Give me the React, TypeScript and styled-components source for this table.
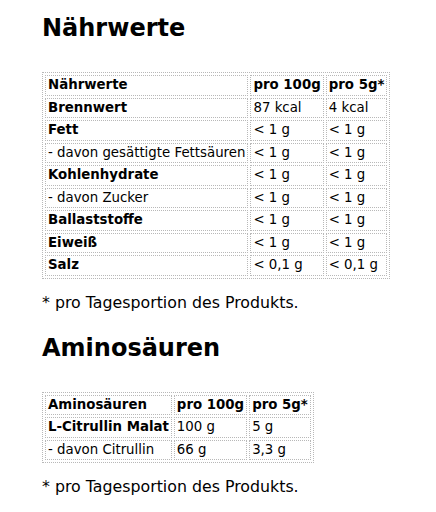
import React, { FC } from "react";
import styled, { createGlobalStyle } from "styled-components";

type Row = {
  label: string;
  bold?: boolean;
  a: string;
  b: string;
};

const nutrition: Row[] = [
  { label: "Brennwert", bold: true, a: "87 kcal", b: "4 kcal" },
  { label: "Fett", bold: true, a: "< 1 g", b: "< 1 g" },
  { label: "- davon gesättigte Fettsäuren", a: "< 1 g", b: "< 1 g" },
  { label: "Kohlenhydrate", bold: true, a: "< 1 g", b: "< 1 g" },
  { label: "- davon Zucker", a: "< 1 g", b: "< 1 g" },
  { label: "Ballaststoffe", bold: true, a: "< 1 g", b: "< 1 g" },
  { label: "Eiweiß", bold: true, a: "< 1 g", b: "< 1 g" },
  { label: "Salz", bold: true, a: "< 0,1 g", b: "< 0,1 g" },
];

const amino: Row[] = [
  { label: "L-Citrullin Malat", bold: true, a: "100 g", b: "5 g" },
  { label: "- davon Citrullin", a: "66 g", b: "3,3 g" },
];

const GlobalStyle = createGlobalStyle`
  body {
    margin: 0;
    background: #fff;
    color: #000;
    font-family: "DejaVu Sans", Verdana, sans-serif;
  }
`;

const Page = styled.div`
  padding: 12px 42px 0;
`;

const Heading = styled.h2`
  margin: 0 0 28px;
  font-size: 24px;
  font-weight: bold;
  line-height: 32px;
`;

const Table = styled.table`
  border: 1px dotted #b8b8b8;
  border-spacing: 2px;
  font-size: 13.33px;
`;

const Cell = styled.td<{ $bold?: boolean }>`
  border: 1px dotted #b8b8b8;
  padding: 2px 2px;
  line-height: 14.5px;
  font-weight: ${(p) => (p.$bold ? "bold" : "normal")};
  white-space: nowrap;
`;

const Note = styled.p`
  margin: 14px 0 20px;
  font-size: 15.8px;
  line-height: 19px;
`;

const NutrientTable: FC<{ title: string; rows: Row[] }> = ({ title, rows }) => (
  <Table>
    <tbody>
      <tr>
        <Cell $bold>{title}</Cell>
        <Cell $bold>pro 100g</Cell>
        <Cell $bold>pro 5g*</Cell>
      </tr>
      {rows.map((r) => (
        <tr key={r.label}>
          <Cell $bold={r.bold}>{r.label}</Cell>
          <Cell>{r.a}</Cell>
          <Cell>{r.b}</Cell>
        </tr>
      ))}
    </tbody>
  </Table>
);

const App: FC = () => (
  <>
    <GlobalStyle />
    <Page>
      <Heading>Nährwerte</Heading>
      <NutrientTable title="Nährwerte" rows={nutrition} />
      <Note>* pro Tagesportion des Produkts.</Note>
      <Heading>Aminosäuren</Heading>
      <NutrientTable title="Aminosäuren" rows={amino} />
      <Note>* pro Tagesportion des Produkts.</Note>
    </Page>
  </>
);

export default App;
